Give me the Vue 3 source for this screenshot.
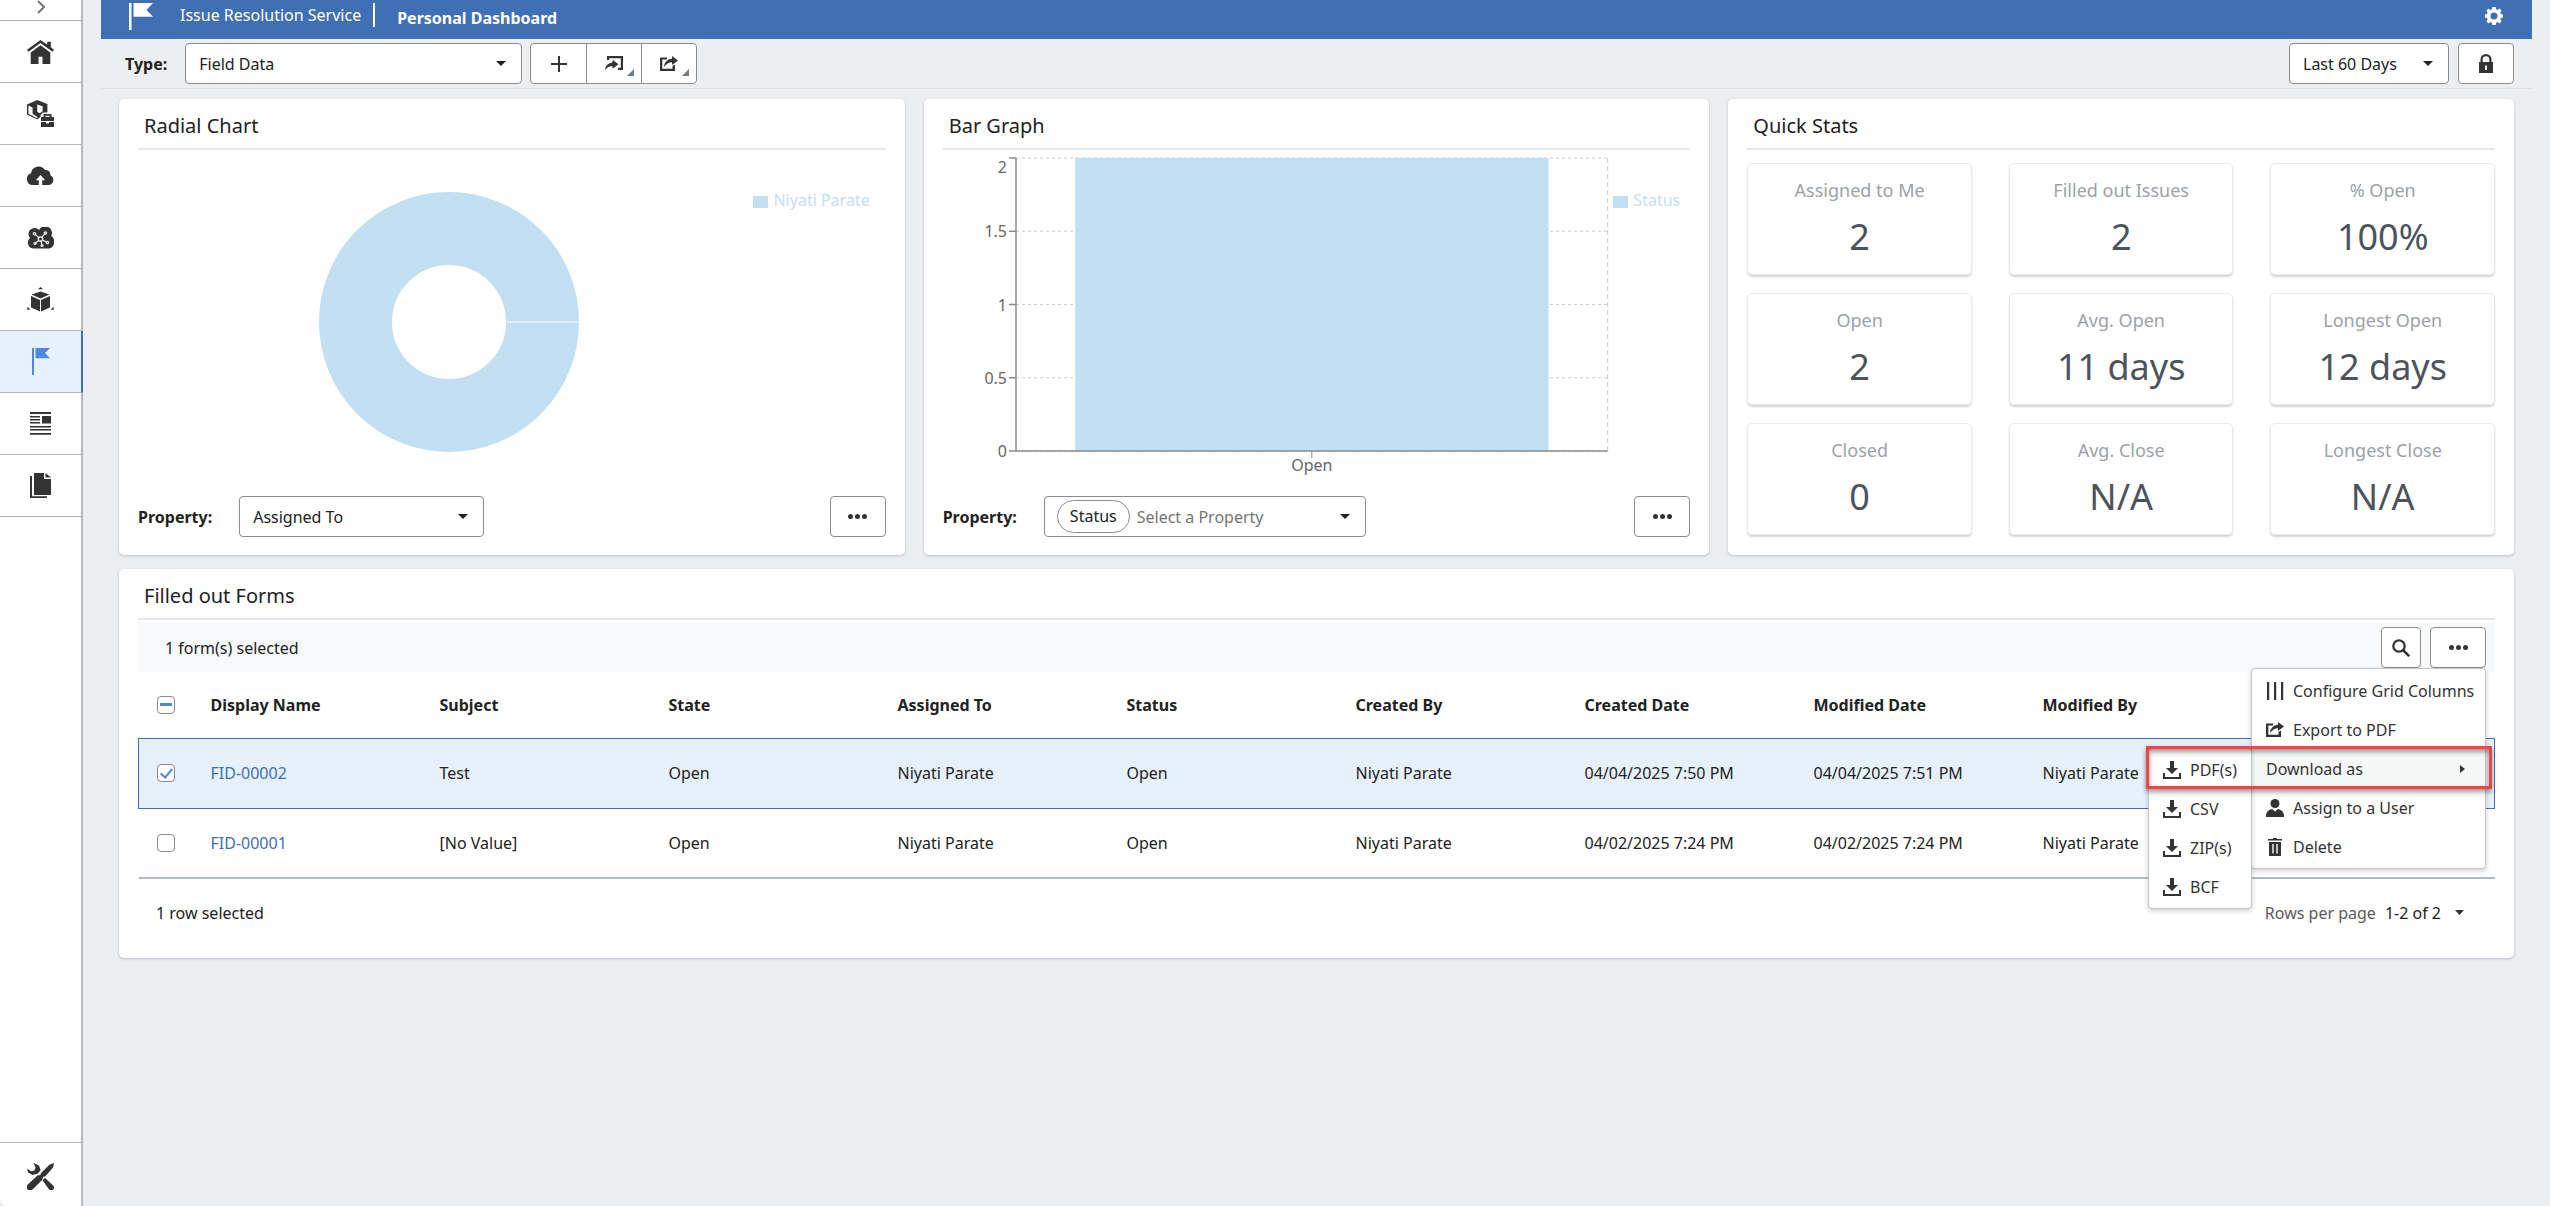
<script setup>
import { ref } from 'vue'

const navItems = [
  { id: 'home', label: 'Home' },
  { id: 'projects', label: 'Project Admin' },
  { id: 'upload', label: 'Upload' },
  { id: 'network', label: 'Cloud Network' },
  { id: 'model', label: 'Model' },
  { id: 'flag', label: 'Issue Resolution Service' },
  { id: 'news', label: 'Reports' },
  { id: 'docs', label: 'Documents' },
]
const activeNav = ref('flag')

const type = ref('Field Data')
const period = ref('Last 60 Days')
const radialProperty = ref('Assigned To')
const barProperty = ref('')

const gridLines = [0, 25, 50, 75, 100]
const yTicks = [
  { y: 0, dy: 15, label: '2' },
  { y: 25, dy: 6, label: '1.5' },
  { y: 50, dy: 6, label: '1' },
  { y: 75, dy: 6, label: '0.5' },
  { y: 100, dy: 6, label: '0' },
]

const stats = [
  { label: 'Assigned to Me', value: '2' },
  { label: 'Filled out Issues', value: '2' },
  { label: '% Open', value: '100%' },
  { label: 'Open', value: '2' },
  { label: 'Avg. Open', value: '11 days' },
  { label: 'Longest Open', value: '12 days' },
  { label: 'Closed', value: '0' },
  { label: 'Avg. Close', value: 'N/A' },
  { label: 'Longest Close', value: 'N/A' },
]

const columns = ['Display Name', 'Subject', 'State', 'Assigned To', 'Status', 'Created By', 'Created Date', 'Modified Date', 'Modified By']
const rows = ref([
  { selected: true, cells: ['FID-00002', 'Test', 'Open', 'Niyati Parate', 'Open', 'Niyati Parate', '04/04/2025 7:50 PM', '04/04/2025 7:51 PM', 'Niyati Parate'] },
  { selected: false, cells: ['FID-00001', '[No Value]', 'Open', 'Niyati Parate', 'Open', 'Niyati Parate', '04/02/2025 7:24 PM', '04/02/2025 7:24 PM', 'Niyati Parate'] },
])

const formats = ['PDF(s)', 'CSV', 'ZIP(s)', 'BCF']
</script>

<template>
  <div class="page">
    <nav class="rail" aria-label="Main">
      <button class="rail-toggle" type="button" aria-label="Expand">
        <svg width="8" height="14" viewBox="0 0 8 14"><path d="M1 1l6 6-6 6" fill="none" stroke="#777" stroke-width="2" /></svg>
      </button>
      <a
        v-for="item in navItems"
        :key="item.id"
        href="#"
        class="rail-item"
        :class="{ active: item.id === activeNav }"
        :aria-label="item.label"
      >
        <svg v-if="item.id === 'home'" width="27" height="24" viewBox="0 0 27 24">
          <path d="M0 9.8L13.5 0l6.7 4.6V1.8h3.6v5.4L27 9.8l-1.5 2L13.5 3 1.5 11.8z" />
          <path d="M3.7 12.6l9.8-7.4 9.8 7.4V24h-7.8v-7.2h-4V24H3.700z" />
        </svg>
        <svg v-else-if="item.id === 'projects'" width="27" height="27" viewBox="0 0 27 27">
          <path d="M10.200 0L20.400 4v8.600h-4.400l-2.400 2.400v1.800L10.200 19.600 0 14.400V4.600z" />
          <path fill="#fff" d="M1.400 5.600l4.200 1.900v6.200l4.800 3.300v1.500L1.400 13.800zM10.200 4.400l5.400 1.800v5.400l-3 1.600-2.400-1.400z" />
          <path d="M16.500 17v-3h8v3h2.500v4H14v-4zm2-1.300V17h4v-1.300zM14 22h5v1.400h3V22h5v5H14z" />
        </svg>
        <svg v-else-if="item.id === 'upload'" width="27" height="19" viewBox="0 0 27 19">
          <path d="M6 19a6 6 0 0 1-2-11.700A7.600 7.600 0 0 1 18 4a4.700 4.700 0 0 1 5.400 5.200A5.200 5.200 0 0 1 22 19z" />
          <path fill="#fff" d="M13.500 9l4.700 5.200h-3V19h-3.400v-4.800h-3z" />
        </svg>
        <svg v-else-if="item.id === 'network'" width="27" height="22" viewBox="0 0 27 22">
          <path d="M6 21.500A6 6 0 0 1 3 11 5.500 5.500 0 0 1 12 3a6.500 6.500 0 0 1 12.300 6A7 7 0 0 1 22 21.500z" />
          <g fill="none" stroke="#fff" stroke-width="1.200">
            <circle cx="13.500" cy="12" r="2.200" /><circle cx="7.500" cy="6.700" r="1.200" /><circle cx="18.500" cy="6" r="1.200" />
            <circle cx="8" cy="16.500" r="1" /><circle cx="15" cy="18.500" r="1" /><circle cx="20.500" cy="15.500" r="1.200" />
            <path d="M8.500 7.600l3.400 3M17.700 7l-2.700 3.200M8.800 15.900l3-2.400M14.800 17.500l-.7-3.400M19.300 15l-3.700-2" />
          </g>
        </svg>
        <svg v-else-if="item.id === 'model'" width="27" height="25" viewBox="0 0 27 25">
          <path d="M13.500 0l2.500 2.300h-5zM0 22.700L.8 19.700l2.400 3zM27 22.700l-.8-3-2.400 3z" />
          <path d="M13.500 4.400l9 3.200-9 4-9-4zM4 9l9 4v11.600l-9-4zM23 9l-9 4v11.600l9-4z" />
        </svg>
        <svg v-else-if="item.id === 'flag'" width="18" height="27" viewBox="0 0 18 27">
          <path d="M0 0h2v27H0zM3.500 0H18l-5 5 5 5.300H3.500z" />
        </svg>
        <svg v-else-if="item.id === 'news'" width="21" height="23" viewBox="0 0 21 23">
          <path d="M0 0h21v2H0zM0 4h10v1.600H0zM0 7h10v1.600H0zM0 10h10v1.600H0zM12 4h9v7.600h-9zM0 14h21v1.600H0zM0 17h21v1.600H0zM0 21h21v1.800H0z" />
        </svg>
        <svg v-else width="21" height="25" viewBox="0 0 21 25">
          <path d="M4 0h10v6h7v16H4zM15.500 0L21 4.600h-5.500zM0 3h2v20.300h15V25H0z" />
        </svg>
      </a>
      <a href="#" class="rail-item rail-tools" aria-label="Tools">
        <svg width="27" height="27" viewBox="0 0 27 27">
          <path d="M22.500 1.800L27 0l-.8 4.200-8 9.300-2.300.6-.5 2.700L5.500 26.400a3.200 3.200 0 0 1-4.900-4.700l9.800-9.300 3-.5.6-2z" />
          <path d="M6.500 0l5.500 2.500 1.600 4.700-2.600 3.300-5.600 1.600L.8 9.300.3 5.600l3.500 2.600 3.600-.6 1.200-3z" />
          <path d="M15.500 17.300l2.600-2.200 8 7.300a2.900 2.900 0 0 1-4 4.200z" />
        </svg>
      </a>
    </nav>

    <div class="workspace">
      <header class="topbar">
        <svg class="brand" width="24" height="27" viewBox="0 0 24 27"><path fill="#fff" d="M0 0h2.500v27H0zM4.500 0H24l-6.500 7L24 13.700H4.500z" /></svg>
        <span class="service">Issue Resolution Service</span>
        <h1>Personal Dashboard</h1>
        <button class="gear" type="button" aria-label="Settings">
          <svg width="18" height="18" viewBox="0 0 18 18">
            <path fill="#fff" fill-rule="evenodd" d="M7.300 0h3.400l.5 2.300 1.300.6 2.100-1.300 1.900 2-1.100 2.200.5 1.200 2.100.5v3l-2.100.5-.5 1.200 1.100 2.200-1.900 2-2.100-1.300-1.300.6-.5 2.300H7.300l-.5-2.300-1.300-.6-2.100 1.300-1.900-2 1.100-2.200-.5-1.200L0 10.500v-3L2.100 7l.5-1.200-1.100-2.200 1.900-2 2.100 1.300 1.300-.6zM9 5.500a3.500 3.500 0 1 0 0 7 3.500 3.500 0 0 0 0-7z" />
          </svg>
        </button>
      </header>

      <div class="toolbar">
        <label for="type">Type:</label>
        <span class="select type-select">
          <select id="type" v-model="type"><option>Field Data</option></select>
        </span>
        <div class="button-group">
          <button type="button" aria-label="Add"><svg width="16" height="16" viewBox="0 0 16 16"><path d="M7 0h2v7h7v2H9v7H7V9H0V7h7z" /></svg></button>
          <button type="button" class="more" aria-label="Import">
            <svg width="18" height="15" viewBox="0 0 18 15">
              <path d="M2 0h16v14h-5v-2.200h2.800V2.200H4.200V4H2z" /><path d="M7.500 3.800l6 4.500-6 4.500v-2.600C4 10 2 11.500 0 14.200 0 10 3.500 6.700 7.500 6.500z" />
            </svg>
          </button>
          <button type="button" class="more" aria-label="Export">
            <svg width="18" height="15" viewBox="0 0 18 15"><path d="M0 1.500h7v2H2.300v9.200h10.200V10l2.500-1.500V15H0zM12 0l6 4.500-6 4.500V6.300C9 6.300 6 8 4 11c0-4 3-8 8-8.300z" /></svg>
          </button>
        </div>
        <span class="select period-select">
          <select v-model="period" aria-label="Period"><option>Last 60 Days</option></select>
        </span>
        <button class="box-button wide" type="button" aria-label="Lock">
          <svg width="14" height="19" viewBox="0 0 14 19"><path fill-rule="evenodd" d="M0 8h1.500V5.500a5.500 5.500 0 0 1 11 0V8H14v11H0zm3.700 0h6.600V5.500a3.300 3.300 0 0 0-6.600 0zM6 11.500V16h2v-4.500z" /></svg>
        </button>
      </div>

      <main>
        <div class="row">
          <section class="card">
            <h2>Radial Chart</h2>
            <div class="radial">
              <svg class="donut" width="260" height="260" viewBox="0 0 260 260" role="img" aria-label="Niyati Parate">
                <circle cx="130" cy="130" r="93.500" fill="none" stroke="#c3dff2" stroke-width="73" />
                <path d="M187 130h73" stroke="#fff" />
              </svg>
              <div class="legend">Niyati Parate</div>
            </div>
            <div class="property">
              <label for="radial-property">Property:</label>
              <span class="select radial-select">
                <select id="radial-property" v-model="radialProperty"><option>Assigned To</option></select>
              </span>
              <button class="box-button wide dots" type="button" aria-label="More"><i></i><i></i><i></i></button>
            </div>
          </section>

          <section class="card">
            <h2>Bar Graph</h2>
            <div class="bar-graph">
              <svg class="plot" role="img" aria-label="Status">
                <line v-for="g in gridLines" :key="g" x1="0" x2="100%" :y1="g + '%'" :y2="g + '%'" stroke="#ccc" stroke-dasharray="3 3" />
                <line x1="100%" x2="100%" y1="0" y2="100%" stroke="#ccc" stroke-dasharray="5 3" />
                <rect x="10%" y="0" width="80%" height="100%" fill="#c3dff2" />
                <g stroke="#8a8a8a" stroke-width="1.500">
                  <line x1="0" x2="0" y1="0" y2="100%" />
                  <line x1="0" x2="100%" y1="100%" y2="100%" />
                  <line v-for="g in gridLines" :key="g" x1="-7" x2="0" :y1="g + '%'" :y2="g + '%'" />
                </g>
                <svg x="50%" y="100%" class="spill">
                  <path d="M0 0v7" stroke="#888" />
                  <text y="20" text-anchor="middle">Open</text>
                </svg>
                <text v-for="t in yTicks" :key="t.label" x="-9" :y="t.y + '%'" :dy="t.dy" text-anchor="end">{{ t.label }}</text>
              </svg>
              <div class="legend">Status</div>
            </div>
            <div class="property">
              <label for="bar-property">Property:</label>
              <span class="select multi">
                <span class="chip">Status</span>
                <select id="bar-property" v-model="barProperty"><option value="">Select a Property</option></select>
              </span>
              <button class="box-button wide dots" type="button" aria-label="More"><i></i><i></i><i></i></button>
            </div>
          </section>

          <section class="card">
            <h2>Quick Stats</h2>
            <dl class="stats">
              <div v-for="s in stats" :key="s.label" class="stat">
                <dt>{{ s.label }}</dt>
                <dd>{{ s.value }}</dd>
              </div>
            </dl>
          </section>
        </div>

        <section class="card forms">
          <h2>Filled out Forms</h2>
          <div class="grid-bar">
            <span>1 form(s) selected</span>
            <button class="box-button narrow" type="button" aria-label="Search">
              <svg width="18" height="18" viewBox="0 0 18 18"><circle cx="7" cy="7" r="5.700" fill="none" stroke="#333" stroke-width="2.300" /><path d="M11 11l6.200 6.200" stroke="#333" stroke-width="2.500" /></svg>
            </button>
            <div class="menu-anchor">
              <button class="box-button wide dots" type="button" aria-label="Grid actions"><i></i><i></i><i></i></button>
              <ul class="menu">
                <li><button type="button">
                  <svg width="18" height="18" viewBox="0 0 18 18"><path d="M1 0h2.200v18H1zM8 0h2.200v18H8zM15 0h2.200v18H15z" /></svg>Configure Grid Columns
                </button></li>
                <li><button type="button">
                  <svg width="18" height="15" viewBox="0 0 18 15"><path d="M0 1.500h7v2H2.300v9.200h10.200V10l2.500-1.500V15H0zM12 0l6 4.500-6 4.500V6.300C9 6.300 6 8 4 11c0-4 3-8 8-8.300z" /></svg>Export to PDF
                </button></li>
                <li class="open">
                  <button type="button">Download as<svg class="side-arrow" width="5" height="8" viewBox="0 0 5 8"><path d="M0 0l5 4-5 4z" /></svg></button>
                  <ul class="menu submenu">
                    <li v-for="f in formats" :key="f"><button type="button">
                      <svg width="18" height="18" viewBox="0 0 18 18"><path d="M7 0h4v7h4l-6 6-6-6h4zM0 12h2v4h14v-4h2v6H0z" /></svg>{{ f }}
                    </button></li>
                  </ul>
                  <span class="highlight"></span>
                </li>
                <li><button type="button">
                  <svg width="18" height="18" viewBox="0 0 18 18"><circle cx="9" cy="4.500" r="4.500" /><path d="M0 18c0-5 1.500-6.500 6-8l3 2.500 3-2.500c4.500 1.500 6 3 6 8z" /></svg>Assign to a User
                </button></li>
                <li><button type="button">
                  <svg width="18" height="18" viewBox="0 0 18 18"><path fill-rule="evenodd" d="M2 1h5V0h4v1h5v1.500H2zM3 4h12v14H3zm3.300 2v9.500h1.400V6zm4 0v9.500h1.400V6z" /></svg>Delete
                </button></li>
              </ul>
            </div>
          </div>

          <table>
            <colgroup><col class="check-col" /><col v-for="c in columns" :key="c" /><col /></colgroup>
            <thead>
              <tr>
                <th><input type="checkbox" class="mixed" aria-label="Select all" /></th>
                <th v-for="c in columns" :key="c" scope="col">{{ c }}</th>
                <td></td>
              </tr>
            </thead>
            <tbody>
              <tr v-for="r in rows" :key="r.cells[0]" :class="{ selected: r.selected }">
                <td><input v-model="r.selected" type="checkbox" :aria-label="r.cells[0]" /></td>
                <td v-for="(c, i) in r.cells" :key="i"><a v-if="i === 0" href="#">{{ c }}</a><template v-else>{{ c }}</template></td>
                <td></td>
              </tr>
            </tbody>
          </table>

          <div class="table-foot">
            <span>1 row selected</span>
            <span class="rows-label">Rows per page</span>
            <button class="pager" type="button">1-2 of 2<svg width="9" height="5" viewBox="0 0 9 5"><path d="M0 0h9L4.500 5z" /></svg></button>
          </div>
        </section>
      </main>
    </div>
  </div>
</template>

<style>
body {
  margin: 0;
  background: #edeef0;
}
</style>

<style scoped>
.page {
  display: flex;
  min-height: 100vh;
  font: 16px/24px "Noto Sans", sans-serif;
  color: #222;
}
.page * {
  box-sizing: border-box;
}
button,
select {
  font: inherit;
  color: inherit;
}
button {
  padding: 0;
  border: 0;
  background: none;
}
svg {
  flex: none;
  fill: #333;
}
h1,
h2,
dl,
dd,
ul {
  margin: 0;
  padding: 0;
  font-weight: 400;
}
ul {
  list-style: none;
}

.rail {
  display: flex;
  flex: none;
  flex-direction: column;
  width: 83px;
  background: #fff;
  border-right: 2px solid #b2b9c0;
  border-bottom-left-radius: 8px;
}
.rail-toggle {
  display: flex;
  justify-content: center;
  height: 21px;
  border-bottom: 1px solid #b2b9c0;
}
.rail-item {
  display: flex;
  align-items: center;
  justify-content: center;
  height: 62px;
  border-bottom: 1px solid #b2b9c0;
}
.rail-item.active {
  margin-right: -2px;
  background: #e7f1fc;
  border-right: 2px solid #3f6fb5;
}
.rail-item.active svg {
  fill: #4f86e0;
}
.rail-tools {
  height: 64px;
  margin-top: auto;
  padding-top: 4px;
  border-top: 1px solid #b2b9c0;
  border-bottom: 0;
}

.workspace {
  flex: 1;
  min-width: 0;
  margin: 0 18px;
}
.topbar {
  display: flex;
  align-items: flex-start;
  height: 39px;
  padding: 3px 29px 0 28px;
  background: #3f6fb5;
  color: #fff;
}
.service {
  margin-left: 27px;
  padding-right: 12px;
  border-right: 2px solid #fff;
}
.topbar h1 {
  margin: 3px 0 0 22px;
  font-size: 16px;
  font-weight: 700;
}
.gear {
  height: 18px;
  margin: 4px 0 0 auto;
}
.gear svg {
  display: block;
}

.toolbar {
  display: flex;
  align-items: center;
  height: 50px;
  padding: 0 18px 0 24px;
  border-bottom: 1px solid #dcdee1;
}
label {
  font-weight: 700;
}
.select {
  position: relative;
  display: flex;
  align-items: center;
  height: 41px;
  background: #fff;
  border: 1px solid #8c8c8c;
  border-radius: 4px;
}
.select::after {
  content: "";
  position: absolute;
  right: 15px;
  border: 5px solid transparent;
  border-top-color: #222;
  border-bottom: 0;
  pointer-events: none;
}
.select select {
  flex: 1;
  height: 100%;
  padding: 0 24px 0 13px;
  border: 0;
  background: none;
  appearance: none;
}
.type-select {
  width: 337px;
  margin: 0 8px 0 18px;
}
.period-select {
  width: 160px;
  margin: 0 9px 0 auto;
}
.button-group {
  display: flex;
  border: 1px solid #8c8c8c;
  border-radius: 4px;
  background: #fff;
}
.button-group button {
  position: relative;
  display: flex;
  align-items: center;
  justify-content: center;
  width: 55px;
  height: 39px;
}
.button-group button + button {
  border-left: 1px solid #8c8c8c;
}
.more::after {
  content: "";
  position: absolute;
  right: 7px;
  bottom: 7px;
  border-left: 7px solid transparent;
  border-bottom: 7px solid #6f7b8d;
}
.box-button {
  display: flex;
  align-items: center;
  justify-content: center;
  height: 41px;
  background: #fff;
  border: 1px solid #8c8c8c;
  border-radius: 4px;
}
.wide {
  width: 56px;
}
.narrow {
  width: 40px;
}
.dots {
  gap: 2px;
}
.dots i {
  width: 5px;
  height: 5px;
  border-radius: 50%;
  background: #333;
}

main {
  display: flex;
  flex-direction: column;
  gap: 14px;
  padding: 10px 18px;
}
.row {
  display: flex;
  gap: 19px;
}
.card {
  flex: 1;
  min-width: 0;
  padding: 0 19px;
  background: #fff;
  border-radius: 5px;
  box-shadow: 0 1px 3px #b9bdc6;
}
.card h2 {
  height: 51px;
  padding: 0 6px;
  border-bottom: 2px solid #e6e7ec;
  font-size: 20px;
  line-height: 54px;
}
.radial,
.bar-graph {
  display: flex;
  height: 346px;
}
.donut {
  margin: 42px auto 0 181px;
}
.legend {
  display: flex;
  align-items: center;
  gap: 5px;
  height: 24px;
  margin-top: 38px;
  color: #c3dff2;
}
.legend::before {
  content: "";
  width: 15px;
  height: 12px;
  margin-top: 4px;
  background: #c3dff2;
}
.radial .legend {
  padding-right: 16px;
}
.bar-graph .legend {
  width: 83px;
  padding-left: 6px;
}
.plot {
  flex: 1;
  min-width: 0;
  height: 293px;
  margin: 8px 0 0 73px;
  overflow: visible;
}
.plot text {
  fill: #666;
}
.spill {
  overflow: visible;
}
.property {
  display: flex;
  align-items: center;
  padding-bottom: 17px;
}
.property .box-button {
  margin-left: auto;
}
.property .select {
  margin-left: 27px;
}
.radial-select {
  width: 245px;
}
.multi {
  width: 322px;
  padding-left: 12px;
}
.multi select {
  padding-left: 7px;
  color: #757575;
}
.chip {
  height: 33px;
  padding: 0 12px;
  border: 1px solid #8c8c8c;
  border-radius: 17px;
  line-height: 31px;
}

.stats {
  display: grid;
  grid-template-columns: repeat(3, 1fr);
  gap: 18px 37px;
  padding: 13px 0 20px;
}
.stat {
  height: 112px;
  padding-top: 14px;
  border: 1px solid #e9eaec;
  border-radius: 5px;
  box-shadow: 0 2px 2px #d3d7db;
  text-align: center;
}
.stat dt {
  font-size: 18px;
  color: #9da1a8;
}
.stat dd {
  margin-top: 11px;
  font-size: 36px;
  line-height: 48px;
  color: #4d535c;
}

.forms {
  flex: none;
}
.grid-bar {
  display: flex;
  align-items: center;
  height: 49px;
  margin-top: 3px;
  padding: 0 9px 0 27px;
  background: #f8f9fb;
}
.grid-bar > .narrow {
  margin: 0 9px 0 auto;
}
.menu-anchor {
  position: relative;
}
.menu {
  position: absolute;
  top: 41px;
  right: 0;
  z-index: 1;
  width: 235px;
  padding: 2px 0;
  background: #fff;
  border: 1px solid #c3c8cc;
  border-radius: 4px;
  box-shadow: 0 2px 5px #0003;
  color: #333;
}
.menu li {
  position: relative;
}
.menu button {
  display: flex;
  align-items: center;
  gap: 9px;
  width: 100%;
  height: 39px;
  padding-left: 14px;
  white-space: nowrap;
}
.menu .open > button {
  justify-content: space-between;
  padding-right: 20px;
  background: #f6f8f8;
}
.submenu {
  top: -1px;
  right: 100%;
  width: 104px;
  padding: 1px 0 2px;
}
.highlight {
  position: absolute;
  z-index: 2;
  inset: -3px -7px -1px -106px;
  border: 3px solid #fb4141;
  box-shadow: 0 3px 5px #0006, inset 0 3px 5px #0006;
  pointer-events: none;
}

table {
  width: 100%;
  table-layout: fixed;
  border-collapse: collapse;
  text-align: left;
}
.check-col {
  width: 66px;
}
th,
td {
  height: 70px;
  padding: 0 6px;
}
thead th,
thead td {
  height: 66px;
}
th:first-child,
td:first-child {
  padding-left: 18px;
}
tbody tr {
  border-bottom: 2px solid #b3babf;
}
tbody tr.selected {
  background: #e7f1fc;
  border: 1px solid #3f6fb5;
}
td a {
  color: #3f6fb5;
  text-decoration: none;
}
input[type="checkbox"] {
  display: flex;
  align-items: center;
  justify-content: center;
  width: 18px;
  height: 18px;
  margin: 0;
  border: 1px solid #8c8c8c;
  border-radius: 4px;
  background: #fff;
  appearance: none;
}
input:checked::after {
  content: "";
  width: 5px;
  height: 10px;
  margin-bottom: 3px;
  border: solid #4f86e0;
  border-width: 0 2px 2px 0;
  transform: rotate(40deg);
}
.mixed::after {
  content: "";
  width: 12px;
  height: 3px;
  background: #4f86e0;
}
.table-foot {
  display: flex;
  align-items: center;
  height: 79px;
  padding: 0 31px 12px 18px;
}
.rows-label {
  margin: 0 9px 0 auto;
  color: #5c5c5c;
}
.pager {
  display: flex;
  align-items: center;
  gap: 14px;
}
</style>
